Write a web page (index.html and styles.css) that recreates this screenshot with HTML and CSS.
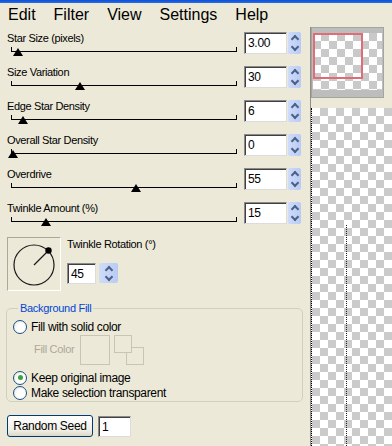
FILE: index.html
```html
<!DOCTYPE html>
<html lang="en">
<head>
  <meta charset="UTF-8" />
  <title>Star Filter</title>
  <link rel="stylesheet" href="styles.css">
</head>
<body>
  <div class="titlebar"></div>
  <nav class="menu">
    <span>Edit</span>
    <span>Filter</span>
    <span>View</span>
    <span>Settings</span>
    <span>Help</span>
  </nav>

  <div class="main">
    <div class="panel">
      <!-- slider rows -->
      <div class="row">
        <div class="slider">
          <div class="label">Star Size (pixels)</div>
          <div class="track"><div class="thumb" style="left: 1px"></div></div>
        </div>
        <div class="num">3.00</div>
        <div class="spin"><span class="up"></span><span class="down"></span></div>
      </div>
      <div class="row">
        <div class="slider">
          <div class="label">Size Variation</div>
          <div class="track"><div class="thumb" style="left: 63px"></div></div>
        </div>
        <div class="num">30</div>
        <div class="spin"><span class="up"></span><span class="down"></span></div>
      </div>
      <div class="row">
        <div class="slider">
          <div class="label">Edge Star Density</div>
          <div class="track"><div class="thumb" style="left: 6px"></div></div>
        </div>
        <div class="num">6</div>
        <div class="spin"><span class="up"></span><span class="down"></span></div>
      </div>
      <div class="row">
        <div class="slider">
          <div class="label">Overall Star Density</div>
          <div class="track"><div class="thumb" style="left: -4px"></div></div>
        </div>
        <div class="num">0</div>
        <div class="spin"><span class="up"></span><span class="down"></span></div>
      </div>
      <div class="row">
        <div class="slider">
          <div class="label">Overdrive</div>
          <div class="track"><div class="thumb" style="left: 119px"></div></div>
        </div>
        <div class="num">55</div>
        <div class="spin"><span class="up"></span><span class="down"></span></div>
      </div>
      <div class="row">
        <div class="slider">
          <div class="label">Twinkle Amount (%)</div>
          <div class="track"><div class="thumb" style="left: 29px"></div></div>
        </div>
        <div class="num">15</div>
        <div class="spin"><span class="up"></span><span class="down"></span></div>
      </div>

      <!-- rotation dial -->
      <div class="dial-row">
        <div class="dial">
          <svg width="52" height="52" viewBox="0 0 52 52">
            <circle cx="26" cy="27" r="20" fill="none" stroke="#1a1a1a" stroke-width="1.2" />
            <line x1="26" y1="27" x2="40" y2="13" stroke="#1a1a1a" stroke-width="1.2" />
            <circle cx="40.5" cy="12.5" r="3.2" fill="#000" />
          </svg>
        </div>
        <div class="dial-side">
          <div class="label">Twinkle Rotation (°)</div>
          <div class="dial-input">
            <div class="num small">45</div>
            <div class="spin wide"><span class="up"></span><span class="down"></span></div>
          </div>
        </div>
      </div>

      <fieldset class="group">
        <legend>Background Fill</legend>
        <div class="option"><span class="radio"></span>Fill with solid color</div>
        <div class="fill-row">
          <span class="fill-label">Fill Color</span>
          <span class="swatch"></span>
          <span class="swap">
            <span class="sq"></span>
            <span class="sq back"></span>
          </span>
        </div>
        <div class="option"><span class="radio on"></span>Keep original image</div>
        <div class="option"><span class="radio"></span>Make selection transparent</div>
      </fieldset>

      <div class="seed-row">
        <button class="btn">Random Seed</button>
        <div class="num seed">1</div>
      </div>
    </div>

    <div class="side">
      <div class="preview">
        <div class="thumbnail"></div>
        <div class="view-rect"></div>
      </div>
      <div class="canvas">
        <div class="ants"></div>
      </div>
    </div>
  </div>
</body>
</html>
```

FILE: styles.css
```css
/* Base */
* { box-sizing: border-box; }
body {
  margin: 0;
  width: 392px;
  height: 446px;
  overflow: hidden;
  background: #ece9d8;
  font-family: 'Liberation Sans', Arial, sans-serif;
  color: #000;
}
.titlebar {
  height: 3px;
  background: linear-gradient(#0a4fd8, #2a6be0);
}

/* Menu */
.menu {
  display: flex;
  gap: 18px;
  height: 24px;
  padding-left: 8px;
  font-size: 16px;
  line-height: 24px;
}

.main { display: flex; }

/* Left controls panel */
.panel {
  width: 310px;
  padding: 5px 0 0 7px;
}
.label {
  font-size: 11px;
  line-height: 13px;
  letter-spacing: -0.35px;
  white-space: nowrap;
}
.row {
  display: flex;
  height: 34px;
}
.slider { width: 237px; }
.track {
  position: relative;
  margin: 2px 0 0 4px;
  width: 226px;
  height: 5px;
  border: 1px solid #000;
  border-top: none;
}
.thumb {
  position: absolute;
  top: 1px;
  width: 0;
  height: 0;
  border-left: 5px solid transparent;
  border-right: 5px solid transparent;
  border-bottom: 8px solid #000;
}
.num {
  width: 43px;
  height: 22px;
  background: #fff;
  border: 1px solid #8a8a8a;
  border-right-color: #dcdcdc;
  border-bottom-color: #dcdcdc;
  box-shadow: inset 1px 1px 0 #404040;
  padding: 3px 0 0 3px;
  font-size: 12px;
  line-height: 15px;
  letter-spacing: -0.3px;
}
.spin {
  display: flex;
  flex-direction: column;
  justify-content: center;
  width: 13px;
  height: 22px;
  margin-left: 1px;
  background: linear-gradient(90deg, #cfdcf9, #b9cbf5);
  border-radius: 2px;
}
.spin span {
  flex: 1;
  display: block;
  position: relative;
}
.spin span::before {
  content: "";
  position: absolute;
  left: 50%;
  width: 4px;
  height: 4px;
  border-left: 2px solid #4d6185;
  border-top: 2px solid #4d6185;
  margin-left: -3px;
}
.spin .up::before { top: 4px; transform: rotate(45deg); }
.spin .down::before { top: 1px; transform: rotate(225deg); }
.spin.wide { width: 19px; height: 20px; margin-left: 3px; }

/* Dial */
.dial-row {
  display: flex;
  gap: 6px;
  margin-top: 1px;
  height: 54px;
}
.dial {
  width: 54px;
  height: 54px;
  border: 1px solid #aca899;
  border-right-color: #fff;
  border-bottom-color: #fff;
}
.dial svg { display: block; }
.dial-side { padding-top: 1px; }
.dial-side .label { font-size: 11px; }
.dial-input {
  display: flex;
  margin-top: 12px;
}
.num.small { width: 29px; height: 21px; }

/* Background fill group */
.group {
  margin: 11px 0 0 -1px;
  width: 297px;
  height: 100px;
  padding: 5px 0 0 6px;
  border: 1px solid #d0d0bf;
  border-radius: 5px;
}
.group legend {
  padding: 0 2px;
  margin-left: 5px;
  font-size: 11px;
  line-height: 12px;
  color: #0046d5;
  letter-spacing: -0.3px;
}
.option {
  display: flex;
  align-items: center;
  gap: 4px;
  height: 15px;
  font-size: 12px;
  letter-spacing: -0.35px;
}
.radio {
  width: 14px;
  height: 14px;
  border-radius: 50%;
  border: 1px solid #1c5180;
  background: radial-gradient(circle at 60% 60%, #fff 40%, #dcdcd6);
  display: flex;
  align-items: center;
  justify-content: center;
}
.radio.on::after {
  content: "";
  width: 5px;
  height: 5px;
  border-radius: 50%;
  background: #3ba33b;
}
.fill-row {
  display: flex;
  height: 36px;
  padding: 1px 0 0 21px;
}
.fill-label {
  margin-top: 8px;
  font-size: 11px;
  color: #aca899;
  letter-spacing: -0.3px;
}
.swatch {
  width: 30px;
  height: 30px;
  margin-left: 6px;
  border: 1px solid #c8c5b5;
}
.swap {
  position: relative;
  width: 31px;
  height: 36px;
  margin-left: 4px;
}
.sq {
  position: absolute;
  left: 0;
  top: 0;
  width: 18px;
  height: 18px;
  border: 1px solid #c8c5b5;
  background: #ece9d8;
}
.sq.back { left: 12px; top: 12px; z-index: -1; }
.sq:first-child { z-index: 1; }

/* Seed */
.seed-row {
  display: flex;
  gap: 5px;
  margin-top: 13px;
}
.btn {
  width: 86px;
  height: 22px;
  padding: 0;
  border: 1px solid #003c74;
  border-radius: 3px;
  background: linear-gradient(#fff, #f1efe6 70%, #dcd8c8);
  font-family: inherit;
  font-size: 12px;
  letter-spacing: -0.3px;
}
.num.seed { width: 33px; height: 21px; margin-top: 1px; }

/* Right side: preview + canvas */
.side {
  width: 82px;
  border-left: 1px solid #8e8d86;
}
.preview {
  position: relative;
  width: 73px;
  height: 71px;
  border: 1px solid #a5a5a0;
  background: #bdbdbd;
  padding: 5px 1px 7px 1px;
}
.thumbnail {
  height: 57px;
  background: repeating-conic-gradient(#c9c9c9 0 25%, #fff 0 50%) 0 0 / 16px 16px;
}
.view-rect {
  position: absolute;
  left: 1px;
  top: 5px;
  width: 50px;
  height: 46px;
  border: 2px solid #e06c78;
}
.canvas {
  position: relative;
  margin-top: 10px;
  height: 338px;
  border-left: 1px dotted #000;
  background: repeating-conic-gradient(#cbcbcb 0 25%, #fff 0 50%) 0 0 / 16px 16px;
}
.ants {
  position: absolute;
  left: 34px;
  top: 117px;
  height: 221px;
  border-left: 1px dotted #222;
}
```
